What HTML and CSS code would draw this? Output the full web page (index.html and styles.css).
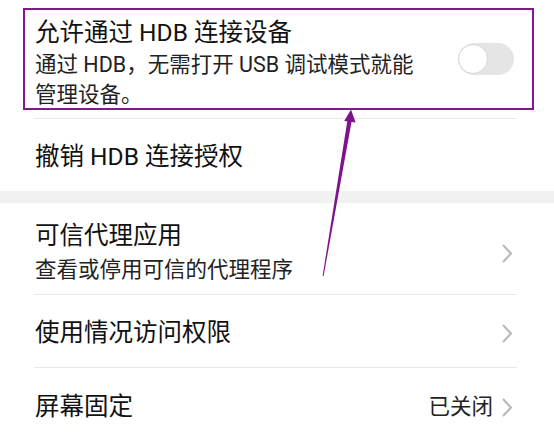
FILE: index.html
```html
<!DOCTYPE html>
<html lang="zh-CN">
<head>
<meta charset="utf-8">
<link rel="stylesheet" href="styles.css">
</head>
<body>
<div class="screen">
  <section class="group">
    <div class="row row-first">
      <div class="text text-narrow">
        <div class="title">允许通过 HDB 连接设备</div>
        <div class="sub">通过 HDB，无需打开 USB 调试模式就能管理设备。</div>
      </div>
      <div class="toggle"><span class="thumb"></span></div>
    </div>
    <div class="row row-single row-revoke">
      <div class="text"><div class="title">撤销 HDB 连接授权</div></div>
    </div>
  </section>
  <div class="band"></div>
  <section class="group">
    <div class="row row-double">
      <div class="text">
        <div class="title">可信代理应用</div>
        <div class="sub">查看或停用可信的代理程序</div>
      </div>
      <svg class="chev" width="10" height="19" viewBox="0 0 10 19"><polyline points="1,1 9,9.5 1,18" fill="none" stroke="#b8b8b8" stroke-width="2"/></svg>
    </div>
    <div class="row row-single">
      <div class="text"><div class="title">使用情况访问权限</div></div>
      <svg class="chev" width="10" height="19" viewBox="0 0 10 19"><polyline points="1,1 9,9.5 1,18" fill="none" stroke="#b8b8b8" stroke-width="2"/></svg>
    </div>
    <div class="row row-single row-last">
      <div class="text"><div class="title">屏幕固定</div></div>
      <span class="value">已关闭</span>
      <svg class="chev" width="10" height="19" viewBox="0 0 10 19"><polyline points="1,1 9,9.5 1,18" fill="none" stroke="#b8b8b8" stroke-width="2"/></svg>
    </div>
  </section>

  <div class="highlight"></div>
  <svg class="arrow" width="554" height="441" viewBox="0 0 554 441">
    <polygon points="322.6,276 323.6,276 351.9,119.8 347.6,119.2" fill="#7e128c"/>
    <polygon points="351,109.5 344.2,121 355.6,122.4" fill="#7e128c"/>
  </svg>
</div>
</body>
</html>
```

FILE: styles.css
```css
html, body {
  margin: 0;
  padding: 0;
  background: #fff;
}
.screen {
  position: relative;
  width: 554px;
  height: 441px;
  overflow: hidden;
  font-family: Roboto, "Noto Sans CJK SC", sans-serif;
  color: #111;
}
.group {
  padding: 0 37px 0 34px;
}
.row {
  display: flex;
  align-items: center;
  border-bottom: 1px solid #e9e9e9;
}
.row:last-child {
  border-bottom: none;
}
.text {
  flex: 1;
  min-width: 0;
  padding-left: 1px;
}
.text-narrow {
  flex: 0 0 390px;
}
.title {
  font-size: 24.5px;
  line-height: 30px;
}
.sub {
  font-size: 21.5px;
  line-height: 30px;
  color: #222;
  margin-top: 2px;
}
.row-first {
  align-items: flex-start;
  padding: 18px 0 8px;
  justify-content: space-between;
}
.row-revoke {
  padding: 26px 0 17px;
}
.row-double {
  padding: 18px 0 9px;
}
.row-double .sub {
  margin-top: 4px;
}
.row-single {
  padding: 23px 0 19px;
}
.row-last {
  padding-top: 24px;
}
.band {
  height: 12px;
  background: #f1f1f1;
}
.toggle {
  position: relative;
  width: 56px;
  height: 32px;
  margin-top: 25px;
  margin-right: 3px;
  border-radius: 16px;
  background: #e5e5e5;
}
.thumb {
  position: absolute;
  left: 0;
  top: 1px;
  width: 28px;
  height: 28px;
  border-radius: 50%;
  background: #fff;
  border: 1px solid #d6d6d6;
  box-sizing: content-box;
}
.chev {
  flex: none;
  margin-right: 5px;
}
.value {
  font-size: 21.5px;
  line-height: 30px;
  color: #222;
  margin-right: 9px;
}
.highlight {
  position: absolute;
  left: 23px;
  top: 8px;
  width: 511px;
  height: 102px;
  box-sizing: border-box;
  border: 2px solid #84168f;
}
.arrow {
  position: absolute;
  left: 0;
  top: 0;
}
```
